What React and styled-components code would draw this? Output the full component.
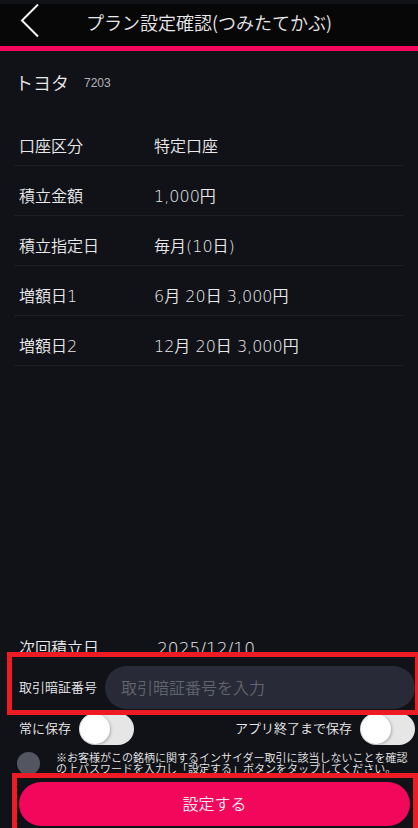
import { useState } from 'react';
import styled, { createGlobalStyle } from 'styled-components';

const details = [
  { label: '口座区分', value: '特定口座' },
  { label: '積立金額', value: '1,000円' },
  { label: '積立指定日', value: '毎月(10日)' },
  { label: '増額日1', value: '6月 20日 3,000円' },
  { label: '増額日2', value: '12月 20日 3,000円' },
];

const App = () => {
  const [pin, setPin] = useState('');
  const [saveAlways, setSaveAlways] = useState(false);
  const [saveSession, setSaveSession] = useState(false);
  const [agreed, setAgreed] = useState(false);

  return (
    <Page>
      <GlobalStyle />
      <Header>
        <BackButton type="button" aria-label="戻る">
          <svg width="20" height="36" viewBox="0 0 20 36" fill="none">
            <path d="M18 0.5 2 16.5l16 16" stroke="#f4f4f4" strokeWidth="2" />
          </svg>
        </BackButton>
        <Title>プラン設定確認(つみたてかぶ)</Title>
      </Header>

      <Stock>
        <StockName>トヨタ</StockName>
        <StockCode>7203</StockCode>
      </Stock>

      <DetailList>
        {details.map((item) => (
          <DetailRow key={item.label}>
            <dt>{item.label}</dt>
            <dd>{item.value}</dd>
          </DetailRow>
        ))}
      </DetailList>

      <OrderForm onSubmit={(e) => e.preventDefault()}>
        <NextDate>
          <span>次回積立日</span>
          <DateValue>2025/12/10</DateValue>
        </NextDate>

        <PinFrame>
          <SmallLabel htmlFor="pin">取引暗証番号</SmallLabel>
          <PinInput
            id="pin"
            type="password"
            placeholder="取引暗証番号を入力"
            value={pin}
            onChange={(e) => setPin(e.target.value)}
          />
        </PinFrame>

        <SaveRow>
          <SaveOption>
            <SmallLabel htmlFor="save-always">常に保存</SmallLabel>
            <Toggle
              id="save-always"
              type="checkbox"
              checked={saveAlways}
              onChange={(e) => setSaveAlways(e.target.checked)}
            />
          </SaveOption>
          <SaveOption>
            <SmallLabel htmlFor="save-session">アプリ終了まで保存</SmallLabel>
            <Toggle
              id="save-session"
              type="checkbox"
              checked={saveSession}
              onChange={(e) => setSaveSession(e.target.checked)}
            />
          </SaveOption>
        </SaveRow>

        <Notice>
          <RoundCheck
            id="agree"
            type="checkbox"
            checked={agreed}
            onChange={(e) => setAgreed(e.target.checked)}
          />
          <NoticeText htmlFor="agree">
            ※お客様がこの銘柄に関するインサイダー取引に該当しないことを確認
            <br />
            の上パスワードを入力し「設定する」ボタンをタップしてください。
          </NoticeText>
        </Notice>

        <SubmitFrame>
          <SubmitButton type="submit">設定する</SubmitButton>
        </SubmitFrame>
      </OrderForm>
    </Page>
  );
};

const GlobalStyle = createGlobalStyle`
  * {
    box-sizing: border-box;
  }

  body {
    margin: 0;
    background: #111217;
    color: #eaeaec;
    font-family: 'Noto Sans CJK JP', sans-serif;
    font-weight: 350;
  }

  button, input {
    font: inherit;
  }
`;

const Page = styled.div`
  display: flex;
  flex-direction: column;
  min-height: 100vh;
  padding-top: 4px;
  overflow: hidden;
`;

const Header = styled.header`
  display: flex;
  align-items: center;
  height: 47px;
  padding-left: 20px;
  background: #070708;
  border-bottom: 5px solid #f2075b;
`;

const BackButton = styled.button`
  display: flex;
  width: 66px;
  height: 42px;
  padding: 0;
  background: none;
  border: none;
  cursor: pointer;
`;

const Title = styled.h1`
  margin: 0;
  padding-bottom: 6px;
  font-size: 18px;
  font-weight: 350;
  line-height: 24px;
  white-space: nowrap;
`;

const Stock = styled.div`
  display: flex;
  align-items: center;
  gap: 15px;
  height: 64px;
  padding-left: 15px;
`;

const StockName = styled.h2`
  margin: 0;
  padding-bottom: 2px;
  font-size: 18px;
  font-weight: 350;
`;

const StockCode = styled.span`
  font-family: 'Liberation Sans', sans-serif;
  font-size: 12px;
  color: #b4b4b8;
`;

const DetailList = styled.dl`
  margin: 1px 14px 0;
`;

const DetailRow = styled.div`
  display: flex;
  align-items: flex-end;
  height: 50px;
  padding: 0 5px 6px;
  border-bottom: 1px solid #1d1e23;
  font-family: 'DejaVu Sans', 'Noto Sans CJK JP', sans-serif;
  font-size: 16px;
  line-height: 24px;

  dt {
    width: 135px;
  }

  dd {
    margin: 0;
  }
`;

const OrderForm = styled.form`
  display: flex;
  flex-direction: column;
  margin-top: auto;
`;

const NextDate = styled.div`
  display: flex;
  height: 16px;
  padding-left: 19px;
  overflow: hidden;
  font-family: 'DejaVu Sans', 'Noto Sans CJK JP', sans-serif;
  font-size: 16px;
  line-height: 26px;

  span:first-child {
    width: 138px;
  }
`;

const DateValue = styled.span`
  font-size: 17px;
`;

const PinFrame = styled.div`
  position: relative;
  z-index: 1;
  display: flex;
  align-items: center;
  height: 63px;
  margin: 0 -2px 0 7px;
  padding: 8px 0 0 7px;
  border: 5px solid #ed1c24;
`;

const SmallLabel = styled.label`
  padding-bottom: 2px;
  font-size: 13px;
  line-height: 20px;
  white-space: nowrap;
`;

const PinInput = styled.input`
  flex: 1;
  min-width: 0;
  height: 43px;
  margin-left: 8px;
  padding: 0 16px 2px;
  background: #282b37;
  border: none;
  border-radius: 22px;
  outline: none;
  color: #dcdcde;
  font-size: 16px;

  &::placeholder {
    color: #62646e;
    opacity: 1;
  }
`;

const SaveRow = styled.div`
  display: flex;
  justify-content: space-between;
  margin-top: -2px;
  padding: 0 3px 0 19px;
`;

const SaveOption = styled.div`
  display: flex;
  align-items: center;
  gap: 8px;
`;

const Toggle = styled.input`
  appearance: none;
  width: 55px;
  height: 32px;
  margin: 0;
  background: #e6e6e6;
  border-radius: 16px;
  cursor: pointer;

  &::before {
    content: '';
    display: block;
    width: 30px;
    height: 30px;
    margin: 1px;
    background: #fff;
    border-radius: 50%;
    box-shadow: 1px 1px 3px rgba(0, 0, 0, 0.25);
  }

  &:checked {
    background: #f2075b;
  }

  &:checked::before {
    margin-left: 24px;
  }
`;

const Notice = styled.div`
  display: flex;
  align-items: flex-start;
  gap: 16px;
  height: 28px;
  padding: 7px 0 0 17px;
`;

const RoundCheck = styled.input`
  appearance: none;
  flex-shrink: 0;
  width: 23px;
  height: 23px;
  margin: 0;
  background: #535560;
  border-radius: 50%;
  cursor: pointer;

  &:checked {
    background: #f2075b;
  }
`;

const NoticeText = styled.label`
  font-size: 11px;
  line-height: 11px;
  white-space: nowrap;
`;

const SubmitFrame = styled.div`
  position: relative;
  z-index: 1;
  margin-left: 12px;
  padding: 4px 3px 2px 2px;
  background: #111217;
  border: 5px solid #ed1c24;
  border-bottom: none;
`;

const SubmitButton = styled.button`
  display: block;
  width: 100%;
  height: 44px;
  padding: 0 0 2px;
  background: #f2075b;
  border: none;
  border-radius: 22px;
  color: #fbe6ee;
  font-size: 16px;
  cursor: pointer;
`;

export default App;
